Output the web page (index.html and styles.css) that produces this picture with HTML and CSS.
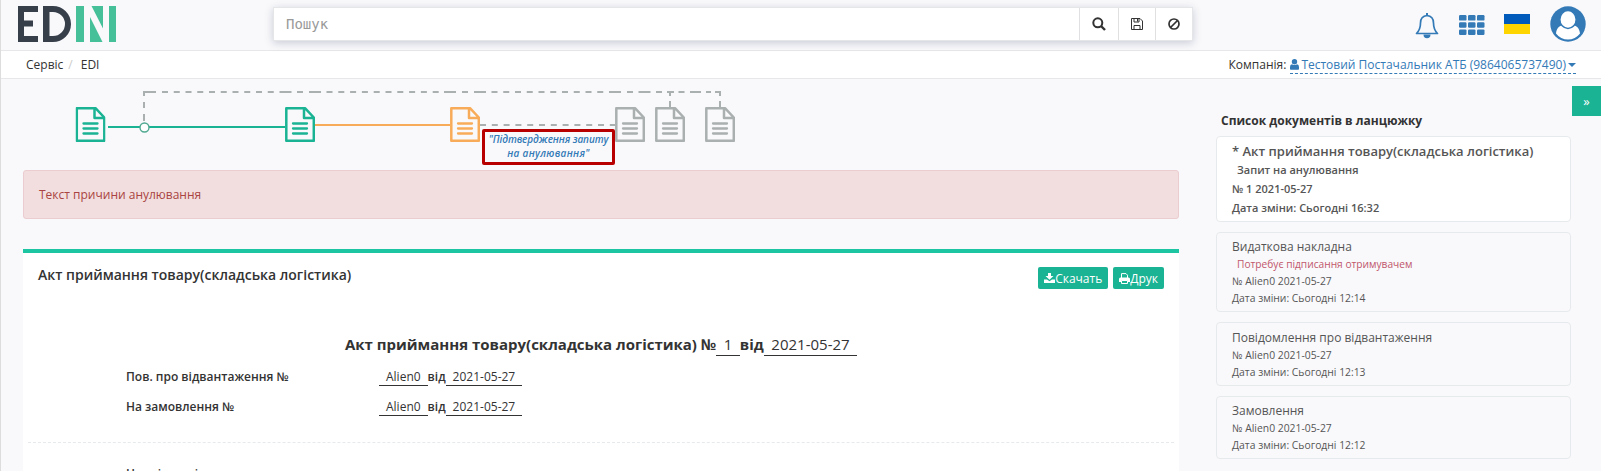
FILE: index.html
```html
<!DOCTYPE html>
<html lang="uk">
<head>
<meta charset="utf-8">
<title>EDIN</title>
<link rel="stylesheet" href="styles.css">
</head>
<body>
<svg width="0" height="0" class="defs">
  <symbol id="doc" viewBox="0 0 30 35"><path d="M1.300 1.200H20L28.800 10.500V33.800H1.300z M19 1v10h10" fill="none" stroke="currentColor" stroke-width="2.500" stroke-linejoin="round"/><path d="M8 16.500h14M8 21.500h14M8 26.500h14" stroke="currentColor" stroke-width="2.300" stroke-linecap="round"/></symbol>
</svg>
<div class="app">
  <header class="top">
    <svg class="logo" width="98" height="36" viewBox="0 0 98 36" role="img" aria-label="EDIN">
      <path fill="#373f4b" d="M0 0h20v6H6v8.500h9v6H6V30h14v6H0z"/>
      <path fill="#373f4b" fill-rule="evenodd" d="M25 0h10a18 18 0 0 1 0 36H25z M31.500 6v24H35a12 12 0 0 0 0-24z"/>
      <path fill="#46c098" d="M58 0h8v36h-8zM72 11l12.500 25H72zM73.500 0H85v22.500zM91 0h7v36h-7z"/>
    </svg>
    <div class="search">
      <input class="search-input" placeholder="Пошук">
      <button class="search-btn b1"><svg width="14" height="14" viewBox="0 0 14 14"><circle cx="5.800" cy="5.800" r="4.500" fill="none" stroke="#333" stroke-width="2"/><path d="M9 9l4 4" stroke="#333" stroke-width="2.400"/></svg></button>
      <button class="search-btn b2"><svg width="12" height="12" viewBox="0 0 12 12" fill="none" stroke="#333"><path d="M.5.5h8.500l2.500 2.500v8.500H.5z M3 11.500V7.500h6v4 M3 .5v3.500h5V.5"/><path d="M6.500 1v2.500"/></svg></button>
      <button class="search-btn b3"><svg width="12" height="12" viewBox="0 0 12 12" fill="none" stroke="#333" stroke-width="1.700"><circle cx="6" cy="6" r="5"/><path d="M9.500 2.500l-7 7"/></svg></button>
    </div>
    <div class="tools">
      <svg class="bell" width="24" height="26" viewBox="0 0 24 26"><path d="M12 2.500C7 3 5.500 6.500 5.500 10c0 5-1.500 8-4 10.500h21c-2.500-2.500-4-5.500-4-10.500 0-3.500-1.500-7-6.500-7.500z" fill="none" stroke="#337ab7" stroke-width="1.700" stroke-linejoin="round"/><path d="M12 0v3" stroke="#337ab7" stroke-width="2"/><path d="M8.500 21.500h7a3.500 3.800 0 0 1-7 0z" fill="#337ab7"/></svg>
      <svg class="grid" width="26" height="20" viewBox="0 0 26 20" fill="#337ab7"><rect width="7.500" height="5.600" rx="1.200"/><rect x="9" width="7.500" height="5.600" rx="1.200"/><rect x="18" width="7.500" height="5.600" rx="1.200"/><rect y="7.200" width="7.500" height="5.600" rx="1.200"/><rect x="9" y="7.200" width="7.500" height="5.600" rx="1.200"/><rect x="18" y="7.200" width="7.500" height="5.600" rx="1.200"/><rect y="14.400" width="7.500" height="5.600" rx="1.200"/><rect x="9" y="14.400" width="7.500" height="5.600" rx="1.200"/><rect x="18" y="14.400" width="7.500" height="5.600" rx="1.200"/></svg>
      <span class="flag"></span>
      <svg class="avatar" width="36" height="36" viewBox="0 0 36 36"><circle cx="18" cy="18" r="17.700" fill="#337ab7"/><path d="M6 27.500c.5-5 3-7.500 6-8 3 3.500 9 3.500 12 0 3 .5 5.500 3 6 8a15 15 0 0 1-24 0z" fill="#fff"/><ellipse cx="18" cy="13.500" rx="8.200" ry="9" fill="#fff" stroke="#337ab7" stroke-width="1.500"/></svg>
    </div>
  </header>
  <nav class="crumbs">
    <div><span>Сервіс</span><span class="sep">/</span><span>EDI</span></div>
    <div class="company">Компанія: <a class="company-link"><svg width="9" height="11" viewBox="0 0 9 11" fill="#337ab7"><circle cx="4.500" cy="2.800" r="2.700"/><path d="M0 10V8q0-2.500 2-2.800 2.500 1.800 5 0 2 .3 2 2.800v2q0 .8-.8.800H.8Q0 10.800 0 10z"/></svg> Тестовий Постачальник АТБ (9864065737490) <i class="caret"></i></a></div>
  </nav>
  <div class="body">
    <main class="main">
      <div class="flow">
        <svg width="760" height="91" viewBox="0 79 760 91">
          <g fill="none" stroke="#aaafb0" stroke-width="2">
            <path d="M144 121v-7M144 108v-6M144 96v-4h12"/>
            <path d="M162 92H279" stroke-dasharray="6 5.750"/>
            <path d="M279.500 92h12M297 92h6M309 92h12"/>
            <path d="M326.500 92H443" stroke-dasharray="6 5.800"/>
            <path d="M444 92h12M462 92h6M474 92h12"/>
            <path d="M491.500 92H608" stroke-dasharray="6 5.750"/>
            <path d="M609 92h12M627 92h6M638.500 92h12M656 92h6M667 92h7M678.500 92h6M690 92h11M706 92h5M715 92h5v4M720 101v6M670 92v4M670 101v6"/>
            <path d="M480 125h135" stroke-dasharray="6 5.800"/>
          </g>
          <path d="M108 127h177" stroke="#1ab394" stroke-width="2"/>
          <path d="M315 125h135" stroke="#f8ac59" stroke-width="2"/>
          <circle cx="144.500" cy="127.500" r="4.500" fill="#fff" stroke="#4fa890" stroke-width="1.400"/>
          <g color="#1ab394"><use href="#doc" x="75.500" y="107" width="30" height="35"/><use href="#doc" x="285" y="107" width="30" height="35"/></g>
          <g color="#f8ac59"><use href="#doc" x="450" y="107" width="30" height="35"/></g>
          <g color="#aaafb0"><use href="#doc" x="615" y="107" width="30" height="35"/><use href="#doc" x="655" y="107" width="30" height="35"/><use href="#doc" x="705" y="107" width="30" height="35"/></g>
        </svg>
        <div class="flow-label"><span class="l1">"Підтвердження запиту</span><br><span class="l2">на анулювання"</span></div>
      </div>
      <div class="alert">Текст причини анулювання</div>
      <section class="panel">
        <div class="panel-head">
          <h5 class="panel-title">Акт приймання товару(складська логістика)</h5>
          <div class="actions">
            <button class="btn"><svg width="11" height="10" viewBox="0 0 11 10" fill="#fff"><path d="M4 0h3v3h2.500l-4 3.800L1.500 3H4z"/><path d="M0 6.500h3l2.500 1.800L8 6.500h3V10H0z"/></svg>Скачать</button>
            <button class="btn"><svg width="11" height="11" viewBox="0 0 11 11"><path d="M2.500 5V.6h4.500l1.500 1.600V5" fill="none" stroke="#fff"/><path d="M0 9V6q0-1.500 1.500-1.500h8Q11 4.500 11 6v3H9V7.500H2V9z" fill="#fff"/><path d="M2.500 7.500h6v3h-6z" fill="none" stroke="#fff"/></svg>Друк</button>
          </div>
        </div>
        <div class="doc-title"><b>Акт приймання товару(складська логістика) №</b><span class="val">1</span><b>від</b><span class="val">2021-05-27</span></div>
        <div class="row"><b class="lbl">Пов. про відвантаження №</b><span class="val">Alien0</span><b>від</b><span class="val">2021-05-27</span></div>
        <div class="row"><b class="lbl">На замовлення №</b><span class="val">Alien0</span><b>від</b><span class="val">2021-05-27</span></div>
        <div class="divider"></div>
        <div class="row last"><b class="lbl">На підставі</b></div>
      </section>
    </main>
    <aside class="side">
      <h4 class="side-title">Список документів в ланцюжку</h4>
      <div class="card active"><div class="name">* Акт приймання товару(складська логістика)</div><div class="status">Запит на анулювання</div><div>№ 1 2021-05-27</div><div>Дата зміни: Сьогодні 16:32</div></div>
      <div class="card c2"><div class="name">Видаткова накладна</div><div class="status warn">Потребує підписання отримувачем</div><div>№ Alien0 2021-05-27</div><div>Дата зміни: Сьогодні 12:14</div></div>
      <div class="card c3"><div class="name tall">Повідомлення про відвантаження</div><div>№ Alien0 2021-05-27</div><div>Дата зміни: Сьогодні 12:13</div></div>
      <div class="card c4"><div class="name">Замовлення</div><div>№ Alien0 2021-05-27</div><div>Дата зміни: Сьогодні 12:12</div></div>
    </aside>
    <button class="toggle">»</button>
  </div>
</div>
</body>
</html>
```

FILE: styles.css
```css
* { box-sizing: border-box; }
body { margin: 0; height: 471px; overflow: hidden; background: #f9f9fb; font-family: "Open Sans", sans-serif; font-size: 12px; color: #333; }
b { font-weight: 600; }
button { font-family: inherit; border: 0; padding: 0; margin: 0; }
svg { display: block; flex: none; }
.defs { position: absolute; }
.app { height: 471px; overflow: hidden; border-left: 1px solid #ddd; }
.top { height: 51px; border-bottom: 1px solid #e7e7ea; display: flex; padding-left: 17px; }
.logo { margin-top: 6px; }
.search { margin: 7px 0 0 157px; width: 920px; height: 34px; display: flex; background: #fff; border: 1px solid #e5e6e7; box-shadow: 0 2px 8px rgba(60, 70, 110, .25); }
.search-input { flex: 1; min-width: 0; border: 0; outline: 0; padding: 0 12px; font: 14px "DejaVu Sans Mono", monospace; background: transparent; }
.search-input::placeholder { color: #999; }
.search-btn { background: #fff; border-left: 1px solid #e0e0e2; display: flex; align-items: center; justify-content: center; }
.b1 { width: 39px; }
.b2 { width: 37px; }
.b3 { width: 37px; }
.tools { display: flex; margin-left: 222px; }
.bell { margin-top: 13px; }
.grid { margin: 15px 0 0 20px; }
.flag { width: 26px; height: 20px; margin: 14px 0 0 19px; background: linear-gradient(#005bbb 50%, #ffd500 50%); }
.avatar { margin: 6px 0 0 20px; }
.crumbs { height: 28px; background: #fff; border-bottom: 1px solid #e7e7ea; display: flex; justify-content: space-between; padding: 5px 25px 0 25px; line-height: 18px; }
.sep { color: #ccc; margin: 0 8px 0 5px; }
.company { display: flex; gap: 4px; }
.company-link { color: #337ab7; display: flex; align-items: center; gap: 2px; height: 18px; border-bottom: 1px dashed #337ab7; }
.caret { border: 4px solid transparent; border-top: 4px solid #337ab7; border-bottom: 0; }
.body { display: flex; position: relative; }
.main { width: 1156px; margin-left: 22px; }
.flow { position: relative; height: 91px; margin-left: -23px; }
.flow-label { position: absolute; left: 482px; top: 50px; width: 133px; height: 36px; border: 3px solid #b90000; border-radius: 2px; color: #337ab7; font: italic 600 10px/14px "Open Sans", sans-serif; text-align: center; white-space: nowrap; }
.l1 { letter-spacing: -.1px; }
.l2 { letter-spacing: .3px; }
.alert { height: 49px; background: #f2dede; border: 1px solid #ebccd1; border-radius: 3px; color: #a94442; padding: 0 15px; line-height: 47px; }
.panel { margin-top: 30px; height: 300px; background: #fff; border-top: 4px solid #1dc5a3; }
.panel-head { display: flex; justify-content: space-between; padding: 13px 15px 0; height: 79px; }
.panel-title { margin: 0; font-size: 14px; font-weight: 600; line-height: 18px; }
.actions { display: flex; gap: 5px; margin-top: 1px; }
.btn { height: 22px; padding: 0 6px; border-radius: 2px; background: #1ab394; color: #fff; font-size: 12px; display: flex; align-items: center; }
.doc-title { display: flex; justify-content: center; font-size: 15px; line-height: 24px; height: 34px; }
.doc-title b { font-weight: 700; }
.doc-title .val { height: 24px; padding: 0 7.500px; }
.val { padding: 0 7px; border-bottom: 1px solid #333; height: 17px; }
.row { display: flex; height: 30px; padding-left: 103px; line-height: 16px; padding-top: 3px; }
.lbl { width: 253px; }
.divider { margin: 16px 5px 0; border-top: 1px dashed #e7eaec; height: 24px; }
.last { padding-top: 0; word-spacing: 5px; }
.side { width: 355px; margin-left: 37px; padding-top: 33px; color: #555; font-size: 10.350px; }
.side-title { margin: 0 0 6px 5px; font-size: 12px; line-height: 18px; font-weight: 700; color: #333; }
.card { border: 1px solid #e7eaec; border-radius: 4px; padding: 5px 15px 0; margin-bottom: 10px; line-height: 17px; }
.card .name { font-size: 12px; line-height: 18px; }
.card .name.tall { line-height: 19px; }
.status { padding-left: 5px; }
.warn { color: #c0566b; font-size: 10.200px; }
.active { background: #fff; font-size: 11px; font-weight: 600; line-height: 19px; height: 86px; }
.active .name { font-size: 13px; line-height: 19px; margin-bottom: -1px; }
.c2 { height: 80px; }
.c3 { height: 64px; }
.c4 { height: 63px; }
.toggle { position: absolute; right: 0; top: 7px; width: 29px; height: 30px; background: #1ab394; color: #fff; font-size: 13px; }
```
